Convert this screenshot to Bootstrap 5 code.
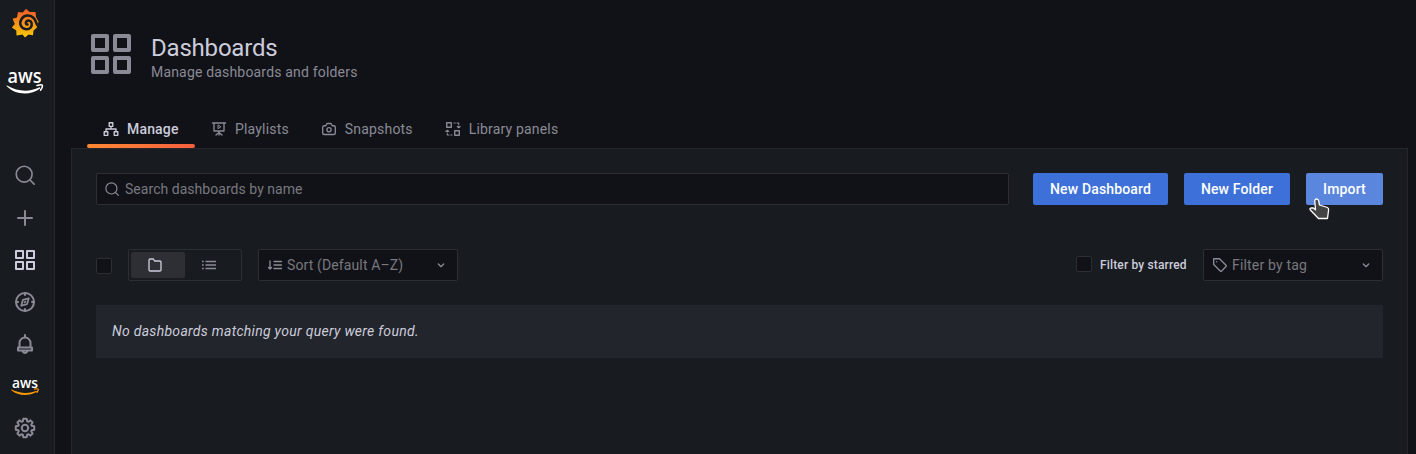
<!DOCTYPE html>
<html lang="en" data-bs-theme="dark">
<head>
<meta charset="utf-8">
<title>Dashboards</title>
<link href="https://cdn.jsdelivr.net/npm/bootstrap@5.3.0/dist/css/bootstrap.min.css" rel="stylesheet">
<style>
  :root { --canvas:#111217; --panel:#181b1f; --soft:#22252b; --line:#25272c; --line2:#2c2e33; --txt:#ccccdc; --dim:#8a8a96; --faint:#78787f; }
  body { background:var(--canvas); color:var(--txt); font-family:Roboto,"Liberation Sans",sans-serif; font-size:14px; line-height:22px; letter-spacing:.15px; height:454px; overflow:hidden; }
  svg { fill:none; stroke:currentColor; stroke-width:2; stroke-linejoin:round; stroke-linecap:round; flex:none; display:block; overflow:visible; }
  svg.s-thin { stroke-width:1.1; }
  svg.s-mid { stroke-width:1.35; }
  svg.s-nav { stroke-width:2; }
  .side { width:55px; height:454px; background:var(--panel); border-right:1px solid var(--line); color:var(--dim); padding-right:4px; }
  .side-item { height:42px; }
  .side-item.current { color:var(--txt); }
  .side-item.find { padding-bottom:2px; }
  .side-list { padding-top:38px; }
  .side-logo { height:46px; }
  .brand-space { height:71px; }
  .page-main { padding-left:16px; padding-right:8px; height:454px; }
  .page-head { height:110px; padding:30px 16px 0; color:var(--dim); }
  .page-head h1 { font-size:24px; line-height:28px; font-weight:400; letter-spacing:-.2px; margin:4px 0 0; color:var(--txt); }
  .sub { line-height:20px; letter-spacing:.18px; }
  .tabs { height:38px; padding-left:16px; }
  .tab-item { padding:0 16px; color:var(--dim); position:relative; height:38px; letter-spacing:.18px; }
  .tab-item.active { color:var(--txt); font-weight:500; width:108px; }
  .tab-item.active::after { content:""; position:absolute; left:0; right:0; bottom:0; height:4px; border-radius:2px; background:linear-gradient(90deg,#ff8833,#f55f3e); }
  .content-box { background:var(--panel); border:1px solid var(--line); border-bottom:0; padding:24px 24px 0; }
  .field { height:32px; background:var(--canvas); border:1px solid var(--line2); border-radius:2px; color:var(--faint); padding:0 8px; letter-spacing:.12px; }
  .finder { letter-spacing:.04px; }
  .finder svg { margin-right:6px; }
  .field svg, .seg svg { color:var(--dim); }
  .btn-act { --bs-btn-bg:#3d71d9; --bs-btn-color:#fff; --bs-btn-border-width:0; --bs-btn-border-radius:2px; --bs-btn-padding-y:0; --bs-btn-padding-x:0; --bs-btn-font-size:14px; --bs-btn-font-weight:500; --bs-btn-line-height:32px; height:32px; white-space:nowrap; letter-spacing:.15px; }
  .w-dash { width:135px; }
  .w-folder { width:106px; }
  .w-import { width:77px; }
  .btn-hot { --bs-btn-bg:#5a86de; }
  .filters { margin-top:44px; }
  .box { width:16px; height:16px; background:var(--canvas); border:1px solid var(--line2); border-radius:2px; flex:none; }
  .box-all { margin-top:2px; }
  .box-star { margin-top:-2px; }
  .seg { width:114px; height:32px; border:1px solid var(--line2); border-radius:2px; padding:2px; }
  .seg-on { width:54px; background:#2d2f34; border-radius:2px; padding-right:6px; }
  .seg .seg-on svg { color:var(--txt); }
  .seg-off { width:48px; }
  .pick-sort { width:200px; }
  .pick-tag { width:180px; letter-spacing:.18px; }
  .starred { font-size:12px; font-weight:500; letter-spacing:.15px; width:87px; white-space:nowrap; }
  .empty-note { background:var(--soft); height:53px; padding:0 16px 2px; font-style:italic; margin-top:24px; letter-spacing:.29px; }
  .pointer { position:absolute; left:3px; top:25px; }
  .aws-text { font-family:"Open Sans",sans-serif; font-weight:600; fill:#fff; stroke:none; letter-spacing:0; }
</style>
</head>
<body>
<svg width="0" height="0" class="position-absolute">
  <defs>
    <symbol id="i-search" viewBox="0 0 24 24"><circle cx="11" cy="11" r="9.500"/><path d="M18 18 23 23"/></symbol>
    <symbol id="i-apps" viewBox="0 0 24 24"><path d="M3 3h7v7H3zM14 3h7v7h-7zM3 14h7v7H3zM14 14h7v7h-7z"/></symbol>
    <symbol id="i-down" viewBox="0 0 24 24"><path d="m8 10.500 4 4 4-4"/></symbol>
  </defs>
</svg>
<div class="d-flex">
  <nav class="side d-flex flex-column">
    <div class="side-logo d-flex justify-content-center align-items-center">
      <svg width="28" height="30" viewBox="0 0 28 30">
        <defs><linearGradient id="flame" x1="0" y1="0" x2="0" y2="1"><stop offset="0" stop-color="#f05a28"/><stop offset="1" stop-color="#fbca0a"/></linearGradient></defs>
        <path fill="url(#flame)" stroke="none" d="M15 .8 18.700 4 24.500 4 25 9 27.500 13.500 26.500 17.500 25.500 20 22.500 22.500 22 27.300 17.500 26.500 14 29.500 11.500 26.500 5.500 27.500 5.300 22.500 .8 19.500 3.800 16 1.600 10.800 6 9.500 7 4 11.800 4.500Z"/>
        <path stroke="#181b1f" stroke-width="2.500" d="M26.500 17.200C24.800 15.500 25.200 12.500 22.700 10 18.800 6 12.700 7.200 10.300 11.300 7.800 15.600 10.200 21 15.200 21.300 18.900 21.500 21.500 18.300 20.600 15 19.900 12.400 16.600 11.700 15.200 13.700 14.300 15.100 15.100 16.700 16.500 16.600"/>
      </svg>
    </div>
    <div class="brand-space d-flex justify-content-center align-items-center">
      <svg width="38" height="28" viewBox="0 0 38 28">
        <text class="aws-text" x="1.500" y="14.500" font-size="19" textLength="34" lengthAdjust="spacingAndGlyphs">aws</text>
        <path fill="#fff" stroke="none" d="M1 17.500C12 24 24 24 33 19.500 34 19 34.800 20 33.800 20.700 25 27.500 9 27 1 18.500 .3 17.800 .5 17.200 1 17.500Z"/>
        <path stroke="#fff" stroke-width="1.500" d="M31 17.500c3-.8 5-.8 5.300-.3.300.8-.5 3.300-1.800 5"/>
      </svg>
    </div>
    <div class="side-list d-flex flex-column align-items-center">
      <div class="side-item find d-flex align-items-center"><svg width="20" height="20"><use href="#i-search"/></svg></div>
      <div class="side-item d-flex align-items-center"><svg class="s-nav" width="24" height="24" viewBox="0 0 24 24"><path d="M12 5v14M5 12h14"/></svg></div>
      <div class="side-item current d-flex align-items-center"><svg width="24" height="24"><use href="#i-apps"/></svg></div>
      <div class="side-item d-flex align-items-center"><svg class="s-nav" width="24" height="24" viewBox="0 0 24 24"><circle cx="12" cy="12" r="9"/><path d="M12 3v2M12 19v2M3 12h2M19 12h2"/><path stroke-width="1.700" d="M15.800 8.200l-1.700 5.900-5.900 1.700 1.700-5.900zM11.500 12.500l1-1"/></svg></div>
      <div class="side-item d-flex align-items-center"><svg class="s-nav" width="24" height="24" viewBox="0 0 24 24"><path d="M12 3v2M6.500 15.500V11a5.500 5.500 0 0 1 11 0v4.500M5 15.500h14v3H5zM9.500 19a2.600 2.600 0 0 0 5 0"/></svg></div>
      <div class="side-item d-flex align-items-center"><svg width="28" height="20" viewBox="0 0 28 20">
        <text class="aws-text" x="1" y="11.500" font-size="14" textLength="26" lengthAdjust="spacingAndGlyphs">aws</text>
        <path fill="#f90" stroke="none" d="M.5 13.500C9 17.500 17 18 25 15 25.800 14.700 26.200 15.500 25.500 16 18 20.200 7 20 .7 14.500 0 13.800 0 13.200 .5 13.500Z"/>
        <path stroke="#f90" stroke-width="1.200" d="M23.500 13.200c2.200-.5 3.400-.5 3.700-.1.200.6-.4 2.200-1.200 3.300"/></svg></div>
      <div class="side-item d-flex align-items-center"><svg class="s-nav" width="24" height="24" viewBox="0 0 24 24"><circle cx="12" cy="12" r="3.200"/><path d="M10.300 2.800h3.400l.5 2.500 1.100.5 2.200-1.400 2.100 2.100-1.400 2.200.5 1.100 2.500.5v3.400l-2.500.5-.5 1.100 1.400 2.200-2.100 2.100-2.200-1.400-1.100.5-.5 2.500h-3.400l-.5-2.500-1.100-.5-2.200 1.400-2.100-2.100 1.400-2.200-.5-1.100-2.500-.5v-3.400l2.500-.5.5-1.100-1.400-2.200 2.100-2.100 2.200 1.400 1.100-.5z"/></svg></div>
    </div>
  </nav>
  <main class="page-main flex-grow-1 d-flex flex-column">
    <header class="page-head d-flex gap-3">
      <svg width="48" height="48"><use href="#i-apps"/></svg>
      <div><h1>Dashboards</h1><div class="sub">Manage dashboards and folders</div></div>
    </header>
    <div class="tabs d-flex">
      <div class="tab-item active d-flex align-items-center gap-2"><svg class="s-mid" width="16" height="16" viewBox="0 0 16 16"><path d="M6.200 1.700h3.600v3.600H6.200zM1.200 10.700h3.600v3.600H1.200zM11.200 10.700h3.600v3.600h-3.600zM8 5.300V8M3 10.700V8h10v2.700"/></svg>Manage</div>
      <div class="tab-item d-flex align-items-center gap-2"><svg class="s-mid" width="16" height="16" viewBox="0 0 16 16"><path d="M1.500 2h13M3 2v8h10V2M8 10v4M8 11.500 5 14M8 11.500l3 2.500"/><path stroke-width="1" d="M7 4.300v3.400L9.600 6z"/></svg>Playlists</div>
      <div class="tab-item d-flex align-items-center gap-2"><svg class="s-mid" width="16" height="16" viewBox="0 0 16 16"><path d="M3.200 4.700h1.600l.7-1.500q.3-.7 1-.7h3q.7 0 1 .7l.7 1.500h1.600q1.500 0 1.500 1.500V12q0 1.500-1.500 1.500H3.200Q1.700 13.500 1.700 12V6.200q0-1.500 1.500-1.500z"/><circle cx="8" cy="8.700" r="2.100"/></svg>Snapshots</div>
      <div class="tab-item d-flex align-items-center gap-2"><svg class="s-thin" width="16" height="16" viewBox="0 0 16 16"><path d="M1.700 1.700h4.600v4.600H1.700zM9.700 9.700h4.600v4.600H9.700z" stroke-width="1.400"/><path d="M9 2h1.200M12 2h1.700v1.500M13.700 5v1.200M12.200 5.500l1.500 1.200 1.500-1.200M7 14H5.800M4 14H2.300v-1.500M2.300 11V9.800M.8 10.500l1.500-1.200 1.500 1.200"/></svg>Library panels</div>
    </div>
    <section class="content-box flex-grow-1">
      <div class="d-flex">
        <div class="field finder d-flex align-items-center flex-grow-1 me-4"><svg width="14" height="14"><use href="#i-search"/></svg>Search dashboards by name</div>
        <div class="d-flex gap-3">
          <button class="btn btn-act w-dash">New Dashboard</button>
          <button class="btn btn-act w-folder">New Folder</button>
          <div class="position-relative">
            <button class="btn btn-act btn-hot w-import">Import</button>
            <svg class="pointer" width="22" height="22" viewBox="0 0 22 22"><path d="M7.500 1c1.200 0 2 .8 2.200 2l.8 4 8 2.500q1.300.6 1.100 2.500L18.500 20.500H9.500L1.300 12Q.3 10.500 1.800 10L4 9.800l2.500 2L5.800 3C5.700 1.800 6.300 1 7.500 1Z" fill="#444" stroke="#fff" stroke-width="1.300"/></svg>
          </div>
        </div>
      </div>
      <div class="filters d-flex align-items-center">
        <div class="box box-all me-3"></div>
        <div class="seg d-flex me-3">
          <div class="seg-on d-flex align-items-center justify-content-center"><svg class="s-mid" width="16" height="16" viewBox="0 0 16 16"><path d="M2 3.200q0-1.200 1.200-1.200h3.200l1.200 2h5.200q1.200 0 1.200 1.200v7.600q0 1.200-1.200 1.200H3.200q-1.200 0-1.200-1.200z"/></svg></div>
          <div class="seg-off d-flex align-items-center justify-content-center"><svg class="s-mid" width="16" height="16" viewBox="0 0 16 16"><path stroke-linecap="butt" d="M1 4.500h1.700M4.500 4.500H15M1 8h1.700M4.500 8H15M1 11.500h1.700M4.500 11.500H15"/></svg></div>
        </div>
        <div class="field pick-sort d-flex align-items-center"><svg class="s-mid me-1" width="16" height="16" viewBox="0 0 16 16"><path d="M3 4v8M1.500 10.500 3 12l1.500-1.500M7 4.500h7.500M7 8h7.500M7 11.500h7.500"/></svg>Sort (Default A–Z)<svg width="16" height="16" class="ms-auto"><use href="#i-down"/></svg></div>
        <div class="box box-star ms-auto"></div>
        <div class="starred ms-2 me-3">Filter by starred</div>
        <div class="field pick-tag d-flex align-items-center"><svg class="s-mid me-1" width="16" height="16" viewBox="0 0 16 16"><path d="M1.700 1.700h5.800l6.500 6.500q.7.700 0 1.400L9.600 14q-.7.700-1.400 0L1.700 7.500z"/><path d="M4.700 4.700v.1"/></svg>Filter by tag<svg width="16" height="16" class="ms-auto"><use href="#i-down"/></svg></div>
      </div>
      <div class="empty-note d-flex align-items-center">No dashboards matching your query were found.</div>
    </section>
  </main>
</div>
<script src="https://cdn.jsdelivr.net/npm/bootstrap@5.3.0/dist/js/bootstrap.bundle.min.js"></script>
</body>
</html>
